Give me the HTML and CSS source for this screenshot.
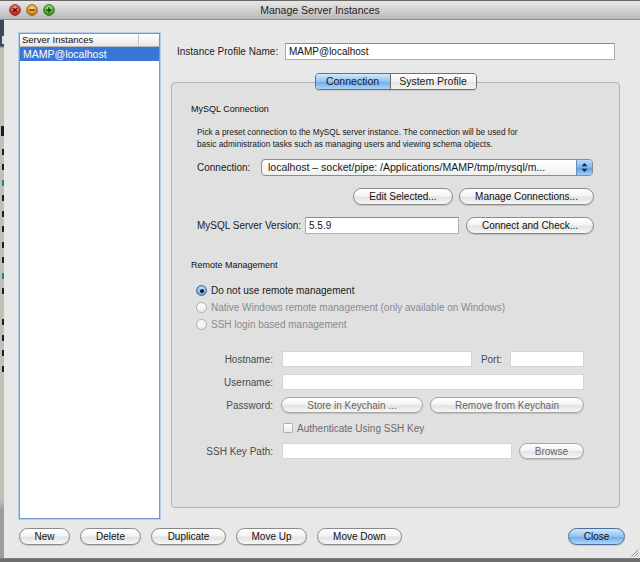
FILE: index.html
```html
<!DOCTYPE html>
<html lang="en">
<head>
  <meta charset="UTF-8" />
  <title>Manage Server Instances</title>
  <link rel="stylesheet" href="styles.css">
</head>
<body>
  <div class="titlebar">
    <div class="lights">
      <svg width="12" height="12" viewBox="0 0 12 12">
        <defs>
          <radialGradient id="red" cx="50%" cy="35%" r="65%">
            <stop offset="0" stop-color="#ffb7ac"/>
            <stop offset=".55" stop-color="#e0463c"/>
            <stop offset="1" stop-color="#a11d16"/>
          </radialGradient>
        </defs>
        <circle cx="6" cy="6" r="5.4" fill="url(#red)" stroke="#85261f" stroke-width=".8"/>
        <path d="M4 4l4 4M8 4l-4 4" stroke="#4a0a05" stroke-width="1.3"/>
      </svg>
      <svg width="12" height="12" viewBox="0 0 12 12">
        <defs>
          <radialGradient id="amber" cx="50%" cy="35%" r="65%">
            <stop offset="0" stop-color="#ffe2a8"/>
            <stop offset=".55" stop-color="#e69c22"/>
            <stop offset="1" stop-color="#a8620a"/>
          </radialGradient>
        </defs>
        <circle cx="6" cy="6" r="5.4" fill="url(#amber)" stroke="#8e5a12" stroke-width=".8"/>
        <path d="M3.3 6h5.4" stroke="#5e3300" stroke-width="1.5"/>
      </svg>
      <svg width="12" height="12" viewBox="0 0 12 12">
        <defs>
          <radialGradient id="green" cx="50%" cy="35%" r="65%">
            <stop offset="0" stop-color="#c8f0b0"/>
            <stop offset=".55" stop-color="#5fb83c"/>
            <stop offset="1" stop-color="#2b7414"/>
          </radialGradient>
        </defs>
        <circle cx="6" cy="6" r="5.4" fill="url(#green)" stroke="#2f6a1c" stroke-width=".8"/>
        <path d="M6 3.3v5.4M3.3 6h5.4" stroke="#0f4706" stroke-width="1.4"/>
      </svg>
    </div>
    <div class="title">Manage Server Instances</div>
  </div>

  <div class="frame">
    <!-- sliver of the desktop window behind the dialog -->
    <div class="edge">
      <div class="edge-line first"><span class="mark light"></span></div>
      <div class="edge-text">
        <div class="edge-line big"><span class="mark"></span></div>
        <div class="edge-line"><span class="mark"></span></div>
        <div class="edge-line"><span class="mark"></span></div>
        <div class="edge-line"><span class="mark teal"></span></div>
        <div class="edge-line"><span class="mark"></span></div>
        <div class="edge-line"><span class="mark"></span></div>
        <div class="edge-line"><span class="mark"></span></div>
        <div class="edge-line"><span class="mark"></span></div>
        <div class="edge-line"><span class="mark"></span></div>
        <div class="edge-line"><span class="mark teal"></span></div>
        <div class="edge-line"><span class="mark"></span></div>
        <div class="edge-line"></div>
        <div class="edge-line"><span class="mark"></span></div>
        <div class="edge-line"><span class="mark"></span></div>
        <div class="edge-line"><span class="mark"></span></div>
        <div class="edge-line"><span class="mark"></span></div>
      </div>
    </div>

    <div class="window">
      <div class="main">
        <div class="instances">
          <div class="list-head">
            <span class="col-name">Server Instances</span>
            <span class="col-extra"></span>
          </div>
          <div class="list-row selected">MAMP@localhost</div>
        </div>

        <div class="pane">
          <div class="profile-row">
            <span class="profile-label">Instance Profile Name:</span>
            <div class="field profile-field">MAMP@localhost</div>
          </div>

          <div class="group">
            <div class="tabs">
              <div class="tab-set">
                <span class="tab active">Connection</span>
                <span class="tab">System Profile</span>
              </div>
            </div>

            <div class="section-title">MySQL Connection</div>
            <p class="desc">Pick a preset connection to the MySQL server instance. The connection will be used for<br>basic administration tasks such as managing users and viewing schema objects.</p>

            <div class="row conn-row">
              <span class="conn-label">Connection:</span>
              <div class="popup">
                <span class="popup-text">localhost – socket/pipe: /Applications/MAMP/tmp/mysql/m...</span>
                <span class="stepper">
                  <svg width="9" height="13" viewBox="0 0 9 13">
                    <path d="M1.5 5.2L4.5 2l3 3.2z" fill="#18263c"/>
                    <path d="M1.5 7.8L4.5 11l3-3.2z" fill="#18263c"/>
                  </svg>
                </span>
              </div>
            </div>

            <div class="row right-row">
              <span class="btn edit-btn">Edit Selected...</span>
              <span class="btn manage-btn">Manage Connections...</span>
            </div>

            <div class="row version-row">
              <span class="version-label">MySQL Server Version:</span>
              <div class="field version-field">5.5.9</div>
              <span class="btn connect-btn">Connect and Check...</span>
            </div>

            <div class="section-title remote-title">Remote Management</div>

            <div class="radios">
              <div class="radio-row"><span class="radio on"></span>Do not use remote management</div>
              <div class="radio-row off"><span class="radio"></span>Native Windows remote management (only available on Windows)</div>
              <div class="radio-row off"><span class="radio"></span>SSH login based management</div>
            </div>

            <div class="remote-form">
              <div class="form-row">
                <span class="form-label">Hostname:</span>
                <div class="field soft host-field"></div>
                <span class="port-label">Port:</span>
                <div class="field soft port-field"></div>
              </div>
              <div class="form-row">
                <span class="form-label">Username:</span>
                <div class="field soft grow"></div>
              </div>
              <div class="form-row">
                <span class="form-label">Password:</span>
                <span class="btn dim store-btn">Store in Keychain ...</span>
                <span class="btn dim remove-btn">Remove from Keychain</span>
              </div>
              <div class="form-row">
                <span class="form-label"></span>
                <span class="check"></span>
                <span class="check-text">Authenticate Using SSH Key</span>
              </div>
              <div class="form-row">
                <span class="form-label">SSH Key Path:</span>
                <div class="field soft grow"></div>
                <span class="btn dim browse-btn">Browse</span>
              </div>
            </div>
          </div>
        </div>
      </div>

      <div class="actions">
        <span class="btn new-btn">New</span>
        <span class="btn delete-btn">Delete</span>
        <span class="btn dup-btn">Duplicate</span>
        <span class="btn up-btn">Move Up</span>
        <span class="btn down-btn">Move Down</span>
        <span class="btn close-btn">Close</span>
      </div>

      <svg class="grip" width="9" height="9" viewBox="0 0 9 9">
        <path d="M8.5 1.5L1.5 8.5M8.5 4.5L4.5 8.5M8.5 7.5L7.5 8.5" stroke="#8f8f8f" stroke-width="1"/>
      </svg>
    </div>
  </div>
</body>
</html>
```

FILE: styles.css
```css
* {
  box-sizing: border-box;
}

body {
  margin: 0;
  width: 640px;
  height: 562px;
  overflow: hidden;
  background: #6e6e6e;
  font-family: "Liberation Sans", Arial, sans-serif;
  font-size: 10px;
  color: #1a1a1a;
}

/* title bar */
.titlebar {
  height: 20px;
  display: grid;
  grid-template-columns: 1fr auto 1fr;
  align-items: center;
  background: linear-gradient(#e7e7e7, #d2d2d2 50%, #bababa);
  border-top: 1px solid #6a6661;
  border-bottom: 1px solid #8b8b8b;
}

.lights {
  display: flex;
  gap: 5px;
  padding-left: 9px;
}

.lights svg {
  display: block;
}

.title {
  font-size: 10.5px;
  color: #1e1e1e;
}

/* body */
.frame {
  display: flex;
  height: 539px;
  border-bottom: 1px solid #7b7b7b;
}

.edge {
  width: 4px;
  overflow: hidden;
  background: linear-gradient(#3b4757 0, #3e4a5a 26px, #c2bfb6 28px, #c2bfb6 480px, #9d9d9d 490px);
}

.edge-line {
  height: 15.5px;
  display: flex;
  justify-content: flex-end;
  align-items: center;
}

.edge-line.first {
  margin-top: 14px;
  height: 12px;
}

.edge-text {
  margin-top: 72px;
}

.edge-line.big {
  height: 26px;
}

.mark {
  width: 2px;
  height: 6px;
  background: #1f1f1f;
}

.edge-line.big .mark {
  width: 3px;
  height: 10px;
}

.mark.light {
  height: 8px;
  background: #d8dde4;
}

.mark.teal {
  background: #2f7b8a;
}

.window {
  flex: 1;
  position: relative;
  background: #e8e8e8;
  padding: 13px 15px 0 15px;
  display: flex;
  flex-direction: column;
}

.main {
  display: flex;
  align-items: flex-start;
  gap: 11px;
}

/* instance list */
.instances {
  width: 141px;
  height: 486px;
  background: #fff;
  border: 1px solid #6c9bd6;
  box-shadow: 0 0 0 1px #b4cdec;
}

.list-head {
  display: flex;
  height: 13px;
  background: linear-gradient(#ffffff, #e8e8e8);
  border-bottom: 1px solid #b7b7b7;
}

.col-name {
  width: 118px;
  padding-left: 2px;
  font-size: 9.5px;
  line-height: 12px;
  color: #111;
}

.col-extra {
  flex: 1;
  border-left: 1px solid #c6c6c6;
}

.list-row {
  height: 14px;
  line-height: 14px;
  padding-left: 3px;
  font-size: 10.5px;
}

.list-row.selected {
  background: #3a76d5;
  color: #fff;
}

/* right pane */
.pane {
  width: 449px;
}

.profile-row {
  display: flex;
  align-items: center;
  margin-top: 10px;
  padding-left: 6px;
}

.profile-label {
  width: 108px;
}

.field {
  height: 17px;
  background: #fff;
  border: 1px solid #aeaeae;
  border-top-color: #8c8c8c;
  padding-left: 3px;
  line-height: 15px;
  font-size: 10px;
  color: #111;
}

.profile-field {
  width: 330px;
}

.group {
  margin-top: 22px;
  height: 426px;
  background: #e0e0e0;
  border: 1px solid #b3b3b3;
  border-radius: 4px;
  padding: 0 25px 0 19px;
}

.tabs {
  display: flex;
  justify-content: center;
  margin: -10px -25px 0 -19px;
}

.tab-set {
  display: flex;
  height: 17px;
  border: 1px solid #6f6f6f;
  border-radius: 4px;
  overflow: hidden;
  box-shadow: 0 1px 1px rgba(0, 0, 0, 0.12);
}

.tab {
  width: 86px;
  text-align: center;
  font-size: 10.5px;
  line-height: 15px;
  background: linear-gradient(#ffffff, #f1f1f1 50%, #e2e2e2 51%, #f3f3f3);
}

.tab.active {
  width: 74px;
  background: linear-gradient(#d3e8fc, #93c3f1 50%, #6eaaea 51%, #a8d3f8);
}

.tab + .tab {
  border-left: 1px solid #6f6f6f;
}

.section-title {
  margin-top: 13px;
  font-size: 9px;
  line-height: 12px;
  color: #111;
}

.desc {
  margin: 11px 0 0 6px;
  font-size: 8.3px;
  line-height: 12px;
}

.row {
  display: flex;
  align-items: center;
  height: 17px;
}

.conn-row {
  margin-top: 9px;
  padding-left: 6px;
}

.conn-label {
  width: 64px;
}

.popup {
  display: flex;
  width: 332px;
  height: 17px;
  border: 1px solid #8c8c8c;
  border-radius: 4px;
  background: linear-gradient(#ffffff, #f0f0f0);
  overflow: hidden;
}

.popup-text {
  flex: 1;
  padding-left: 6px;
  font-size: 10.5px;
  line-height: 15px;
  white-space: nowrap;
  overflow: hidden;
}

.stepper {
  width: 16px;
  display: flex;
  align-items: center;
  justify-content: center;
  border-left: 1px solid #6a8dbd;
  background: linear-gradient(#bddcfb, #7db5ee 50%, #5d9fe6 51%, #9fcbf5);
}

.right-row {
  margin-top: 12px;
  justify-content: flex-end;
  gap: 6px;
}

.btn {
  height: 17px;
  display: flex;
  align-items: center;
  justify-content: center;
  border: 1px solid #898989;
  border-radius: 9px;
  background: linear-gradient(#ffffff, #f4f4f4 45%, #e3e3e3 55%, #f6f6f6);
  box-shadow: 0 1px 1px rgba(0, 0, 0, 0.14);
  font-size: 10px;
  color: #111;
  white-space: nowrap;
}

.btn.dim {
  color: #666;
  border-color: #a6a6a6;
}

.edit-btn {
  width: 100px;
}

.manage-btn {
  width: 135px;
}

.version-row {
  margin-top: 12px;
  padding-left: 6px;
}

.version-label {
  width: 108px;
}

.version-field {
  width: 154px;
}

.connect-btn {
  width: 128px;
  margin-left: 7px;
}

.remote-title {
  margin-top: 25px;
}

/* radios */
.radios {
  margin-top: 11px;
  padding-left: 5px;
}

.radio-row {
  display: flex;
  align-items: center;
  gap: 4px;
  height: 17px;
  font-size: 10px;
}

.radio-row.off {
  color: #8b8b8b;
}

.radio {
  width: 11px;
  height: 11px;
  border-radius: 50%;
  border: 1px solid #adadad;
  background: linear-gradient(#ffffff, #ececec);
  display: flex;
  align-items: center;
  justify-content: center;
}

.radio.on {
  border-color: #4a6a98;
  background: radial-gradient(circle at 50% 35%, #dcecfd, #79b0ea 60%, #4c86cf);
}

.radio.on::after {
  content: "";
  width: 4px;
  height: 4px;
  border-radius: 50%;
  background: #151515;
}

/* remote form */
.remote-form {
  display: flex;
  flex-direction: column;
  gap: 7px;
  margin: 18px 10px 0 6px;
}

.form-row {
  display: flex;
  align-items: center;
  height: 16px;
}

.form-label {
  width: 76px;
  margin-right: 9px;
  text-align: right;
  color: #4b4b4b;
}

.field.soft {
  height: 16px;
  border: 1px solid #d5d5d5;
}

.host-field,
.grow {
  flex: 1;
}

.port-label {
  margin: 0 8px 0 9px;
  color: #4b4b4b;
}

.port-field {
  width: 74px;
}

.store-btn {
  width: 142px;
  height: 16px;
  margin-left: -1px;
}

.remove-btn {
  flex: 1;
  height: 16px;
  margin-left: 7px;
}

.check {
  width: 10px;
  height: 10px;
  margin-left: 1px;
  border: 1px solid #b3b3b3;
  border-radius: 1px;
  background: linear-gradient(#ffffff, #ebebeb);
}

.check-text {
  margin-left: 4px;
  color: #6b6b6b;
}

.browse-btn {
  width: 65px;
  height: 16px;
  margin-left: 7px;
}

/* bottom buttons */
.actions {
  display: flex;
  gap: 10px;
  margin-top: 9px;
}

.new-btn {
  width: 51px;
}

.delete-btn {
  width: 61px;
}

.dup-btn {
  width: 75px;
}

.up-btn {
  width: 71px;
}

.down-btn {
  width: 85px;
}

.close-btn {
  width: 57px;
  margin-left: auto;
  border-color: #4d6d9c;
  background: linear-gradient(#d2e7fb, #93c2f0 50%, #6eaae9 51%, #aad6fa);
}

.grip {
  position: absolute;
  right: 1px;
  bottom: 1px;
}
```
